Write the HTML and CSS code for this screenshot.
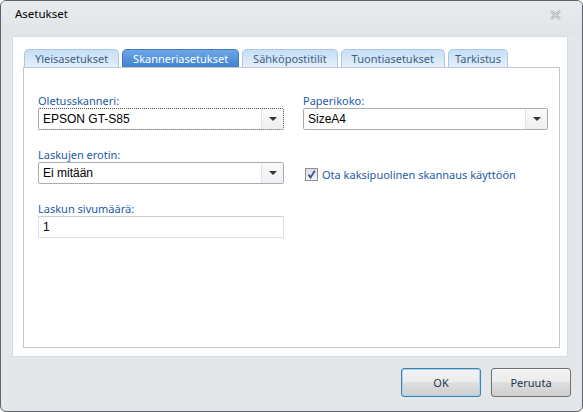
FILE: index.html
```html
<!DOCTYPE html>
<html>
<head>
<meta charset="utf-8">
<link rel="stylesheet" href="styles.css">
</head>
<body>
<div class="window">
  <div class="titlebar">
    <span class="title">Asetukset</span>
    <svg class="close" width="11" height="10" viewBox="0 0 11 10"><path d="M1 1 L10 9 M10 1 L1 9" stroke="#a9adb2" stroke-width="2.4" fill="none"/><path d="M1 1 L10 9 M10 1 L1 9" stroke="#eef0f2" stroke-width="0.9" fill="none"/></svg>
  </div>
  <div class="panel">
    <div class="tabs">
      <div class="tab">Yleisasetukset</div>
      <div class="tab active">Skanneriasetukset</div>
      <div class="tab">Sähköpostitilit</div>
      <div class="tab">Tuontiasetukset</div>
      <div class="tab tab-narrow">Tarkistus</div>
    </div>
    <div class="content">
      <div class="grid">
        <div class="field">
          <div class="label">Oletusskanneri:</div>
          <div class="combo focus"><span class="value">EPSON GT-S85</span><span class="btn"><span class="arrow"></span></span></div>
        </div>
        <div class="field">
          <div class="label">Paperikoko:</div>
          <div class="combo"><span class="value">SizeA4</span><span class="btn"><span class="arrow"></span></span></div>
        </div>
        <div class="field">
          <div class="label">Laskujen erotin:</div>
          <div class="combo"><span class="value">Ei mitään</span><span class="btn"><span class="arrow"></span></span></div>
        </div>
        <div class="check-row">
          <span class="checkbox"><svg width="11" height="11" viewBox="0 0 11 11"><path d="M2.5 5.5 L4.5 8.5 L8.8 1.8" stroke="#3b4fa0" stroke-width="1.8" fill="none"/></svg></span>
          <span class="check-label">Ota kaksipuolinen skannaus käyttöön</span>
        </div>
        <div class="field">
          <div class="label">Laskun sivumäärä:</div>
          <div class="textbox">1</div>
        </div>
      </div>
    </div>
  </div>
  <div class="footer">
    <button class="button default">OK</button>
    <button class="button">Peruuta</button>
  </div>
</div>
</body>
</html>
```
FILE: styles.css
```css
* { box-sizing: border-box; }
html, body { margin: 0; padding: 0; background: #ffffff; }
body { font-family: "Noto Sans", "Open Sans", sans-serif; font-size: 11px; }

.window {
  width: 583px;
  height: 412px;
  border: 1px solid #5e6268;
  border-radius: 6px;
  background: #e4e7ea;
  display: flex;
  flex-direction: column;
  overflow: hidden;
}

.titlebar {
  height: 35px;
  display: flex;
  align-items: flex-start;
  justify-content: space-between;
  padding: 5px 21px 0 14px;
  background: linear-gradient(#e8eaed, #e2e5e8);
}
.title { color: #000; font-size: 11.5px; line-height: 16px; }
.close { margin-top: 4px; }

.panel {
  margin-left: 11px;
  width: 556px;
  height: 321px;
  background: #ffffff;
  border: 1px solid #dadde0;
  padding: 12px 0 0 10px;
  display: flex;
  flex-direction: column;
}

.tabs {
  display: flex;
  gap: 3px;
  height: 18px;
  padding-left: 1px;
}
.tab {
  height: 18px;
  padding: 0 10px;
  border: 1px solid #aac8e8;
  border-bottom: none;
  border-radius: 5px 5px 0 0;
  background: linear-gradient(#c7def5, #e3effb);
  color: #3d5f86;
  font-size: 11px;
  line-height: 17px;
  text-align: center;
}
.tab-narrow { padding: 0 6px; }
.tab.active {
  background: linear-gradient(#6ea7e6, #3f82d0);
  border-color: #3f7cc4;
  color: #ffffff;
}

.content {
  width: 537px;
  height: 281px;
  border: 1px solid #c6c8cb;
  background: #ffffff;
  padding: 25px 0 0 14px;
}

.grid {
  display: grid;
  grid-template-columns: 246px 245px;
  column-gap: 19px;
  row-gap: 17px;
}

.label {
  color: #1c5aa6;
  font-size: 11px;
  line-height: 15px;
  height: 15px;
}

.combo {
  height: 22px;
  border: 1px solid #a9acb0;
  border-radius: 2px;
  display: flex;
  background: #ffffff;
}
.combo.focus { border: 1px dotted #4a4a4a; }
.combo .value {
  flex: 1;
  font-family: "Liberation Sans", Arial, sans-serif;
  font-size: 12px;
  color: #000;
  line-height: 20px;
  padding-left: 4px;
}
.combo .btn {
  width: 22px;
  border-left: 1px solid #e0e2e5;
  background: linear-gradient(#fafafa, #eeeff1);
  display: flex;
  align-items: center;
  justify-content: center;
}
.arrow {
  width: 0;
  height: 0;
  border-left: 4px solid transparent;
  border-right: 4px solid transparent;
  border-top: 4px solid #333;
}

.check-row {
  display: flex;
  align-items: center;
  gap: 4px;
  padding-top: 17px;
  padding-left: 2px;
}
.checkbox {
  width: 13px;
  height: 13px;
  border: 1px solid #8e8f8f;
  background: linear-gradient(#dcdde0, #f7f7f8);
  display: flex;
  align-items: center;
  justify-content: center;
}
.check-label {
  color: #1c5aa6;
  font-size: 11px;
  line-height: 15px;
}

.textbox {
  height: 22px;
  border: 1px solid #dfe1e4;
  border-top-color: #cfd2d6;
  font-family: "Liberation Sans", Arial, sans-serif;
  font-size: 12px;
  line-height: 20px;
  padding-left: 4px;
  color: #000;
}

.footer {
  flex: 1;
  display: flex;
  justify-content: flex-end;
  align-items: flex-start;
  gap: 10px;
  padding: 11px 11px 0 0;
}
.button {
  width: 80px;
  height: 29px;
  border: 1px solid #707070;
  border-radius: 3px;
  background: linear-gradient(#f3f3f3 0%, #ebebeb 48%, #dddddd 52%, #cfcfcf 100%);
  font-family: "Noto Sans", "Open Sans", sans-serif;
  font-size: 11px;
  color: #1e3552;
  padding: 0;
}
.button.default {
  border-color: #3c7fb1;
  box-shadow: inset 0 0 0 1px #a6d3ef;
}
```
